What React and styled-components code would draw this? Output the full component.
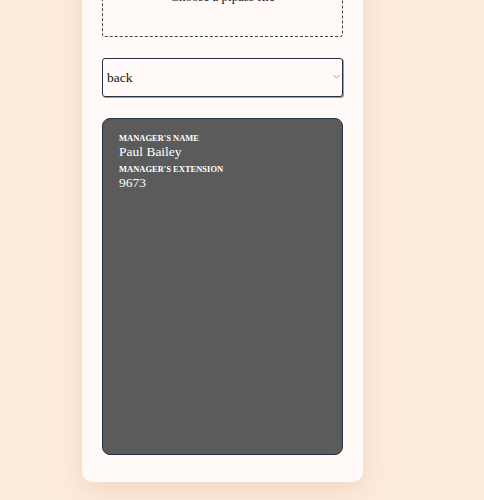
import React from "react";
import styled, { createGlobalStyle } from "styled-components";

const GlobalStyle = createGlobalStyle`
  html, body {
    margin: 0;
    padding: 0;
    background: #fdebdb;
    font-family: "Liberation Serif", "Times New Roman", serif;
  }
`;

const Page = styled.div`
  padding: 0 0 19px 82px;
  margin-top: -29px;
`;

const Card = styled.div`
  width: 241px;
  background: #fffaf7;
  border-radius: 10px;
  padding: 0 20px 27px;
  box-shadow: 0 6px 24px rgba(214, 176, 140, 0.35);
  display: flex;
  flex-direction: column;
  gap: 21px;
`;

const Dropzone = styled.div`
  height: 66px;
  border: 1px dashed #444;
  border-top: none;
  border-radius: 0 0 3px 3px;
  padding-top: 18px;
  box-sizing: border-box;
  text-align: center;
  font-size: 13px;
  color: #111;
`;

const SelectWrap = styled.div`
  position: relative;
`;

const Select = styled.select`
  appearance: none;
  display: block;
  height: 39px;
  width: 100%;
  border: 1px solid #243244;
  border-radius: 3px;
  background: #fffaf7;
  font-family: "Liberation Serif", serif;
  font-size: 13.5px;
  color: #111;
  padding: 0 4px;
  box-shadow: 1px 1px 0 #9aa0a6;
`;

const Chevron = styled.svg`
  position: absolute;
  right: 3px;
  top: 16px;
  pointer-events: none;
`;

const Panel = styled.div`
  height: 337px;
  box-sizing: border-box;
  background: #5b5b5b;
  border: 1px solid #243244;
  border-radius: 8px;
  padding: 14px 16px;
  color: #fff;
`;

const Label = styled.div`
  font-size: 8.5px;
  font-weight: bold;
  text-transform: uppercase;
  line-height: 11px;
`;

const Value = styled.div`
  font-size: 13.5px;
  line-height: 16px;
  margin-bottom: 4px;
`;

export default function App() {
  return (
    <Page>
      <GlobalStyle />
      <Card>
        <Dropzone>Choose a pipass file</Dropzone>
        <SelectWrap>
          <Select defaultValue="back">
            <option value="back">back</option>
            <option value="front">front</option>
          </Select>
          <Chevron width="7" height="5" viewBox="0 0 7 5">
            <path d="M0.5 1 L3.5 4 L6.5 1" fill="none" stroke="#9a9a9a" strokeWidth="1" />
          </Chevron>
        </SelectWrap>
        <Panel>
          <Label>Manager's name</Label>
          <Value>Paul Bailey</Value>
          <Label>Manager's extension</Label>
          <Value>9673</Value>
        </Panel>
      </Card>
    </Page>
  );
}
